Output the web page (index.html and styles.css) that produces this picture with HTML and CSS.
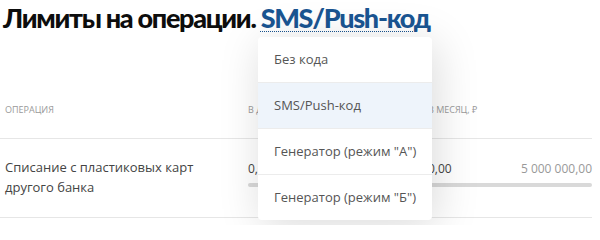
FILE: index.html
```html
<!DOCTYPE html>
<html lang="ru">
<head>
<meta charset="utf-8">
<link rel="stylesheet" href="styles.css">
</head>
<body>
<div class="page">
  <h1 class="title">Лимиты на операции. <span class="title-link">SMS/Push-код</span></h1>
  <div class="table">
    <div class="row head">
      <div class="c1">Операция</div>
      <div class="c2">В день, ₽</div>
      <div class="c3">В месяц, ₽</div>
    </div>
    <div class="row body">
      <div class="c1">Списание с пластиковых карт<br>другого банка</div>
      <div class="c2">
        <div class="vals"><span>0,00</span><span class="max">500 000,00</span></div>
        <div class="bar"></div>
      </div>
      <div class="c3">
        <div class="vals"><span>0,00</span><span class="max">5 000 000,00</span></div>
        <div class="bar"></div>
      </div>
    </div>
  </div>
  <ul class="menu">
    <li class="item">Без кода</li>
    <li class="item active">SMS/Push-код</li>
    <li class="item">Генератор (режим "А")</li>
    <li class="item">Генератор (режим "Б")</li>
  </ul>
</div>
</body>
</html>
```
FILE: styles.css
```css
html, body {
  margin: 0;
  padding: 0;
  background: #fff;
}
.page {
  position: relative;
  width: 600px;
  height: 225px;
  overflow: hidden;
  font-family: "Open Sans", "Noto Sans", sans-serif;
}
.title {
  margin: 0;
  padding: 2px 0 0 3px;
  font-family: Lato, "DejaVu Sans Condensed", sans-serif;
  font-weight: 900;
  font-size: 27px;
  line-height: 32px;
  letter-spacing: -1.3px;
  word-spacing: 0;
  color: #0d0d0d;
}
.title-link {
  color: #1a5592;
  text-decoration-line: underline;
  text-decoration-style: dotted;
  text-decoration-thickness: 1px;
  text-underline-offset: 3px;
}
.table {
  margin-top: 62px;
  width: 592px;
}
.row {
  display: flex;
  border-bottom: 1px solid #e6e6e6;
}
.head {
  height: 43px;
  box-sizing: border-box;
  font-size: 9px;
  text-transform: uppercase;
  color: #9a9a9a;
  line-height: 12px;
}
.head .c1, .head .c2, .head .c3 {
  padding-top: 8px;
}
.body {
  height: 78px;
  font-size: 13px;
  line-height: 20px;
  color: #444;
}
.c1 {
  width: 243px;
  padding-left: 5px;
}
.c2 {
  width: 180px;
}
.c3 {
  flex: 1;
}
.body .c1 {
  padding-top: 18px;
}
.body .c2, .body .c3 {
  padding-top: 22px;
  font-size: 12px;
}
.vals {
  display: flex;
  justify-content: space-between;
  line-height: 16px;
}
.max {
  color: #999;
}
.bar {
  margin-top: 6px;
  height: 4px;
  background: #d9d9d9;
  border-radius: 2px;
}
.c2 .bar {
  margin-right: 8px;
}
.menu {
  position: absolute;
  left: 258px;
  top: 37px;
  width: 174px;
  margin: 0;
  padding: 0;
  list-style: none;
  background: #fff;
  border-radius: 4px;
  box-shadow: 4px 6px 44px rgba(0, 0, 0, 0.15);
  overflow: hidden;
}
.item {
  height: 45px;
  line-height: 44px;
  padding-left: 16px;
  font-size: 13px;
  color: #555;
  border-bottom: 1px solid #ececec;
}
.item:last-child {
  border-bottom: none;
}
.active {
  background: #eef4fb;
}
```
